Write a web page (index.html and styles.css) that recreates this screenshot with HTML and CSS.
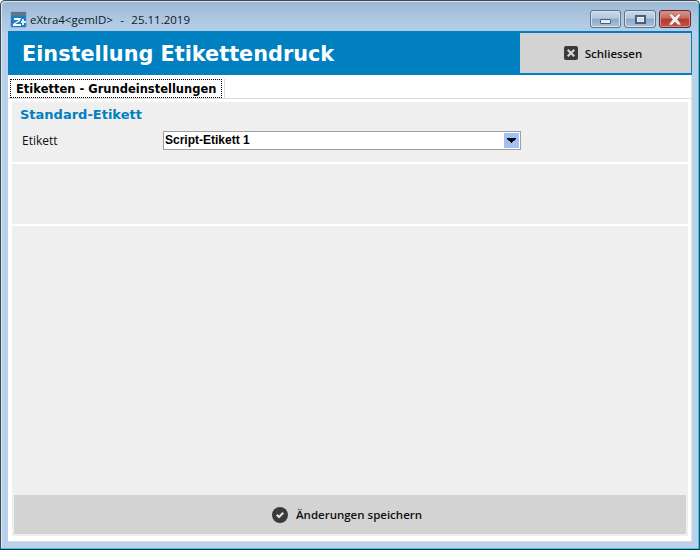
FILE: index.html
```html
<!DOCTYPE html>
<html lang="de">
<head>
<meta charset="utf-8">
<title>eXtra4</title>
<link rel="stylesheet" href="styles.css">
</head>
<body>
<div class="window">
  <div class="titlebar">
    <svg class="app-icon" width="17" height="17" viewBox="0 0 17 17">
      <rect x="0.5" y="0.5" width="16" height="16" rx="2" fill="#1f7fc4" stroke="#8fb8d8"/>
      <rect x="1" y="1" width="15" height="4" fill="#5a7690"/>
      <path d="M4 7h7l-1 3-5 3h6v2H3v-2l6-4H4z" fill="#fff"/>
      <path d="M12 8h2v2h2v2h-2v2h-2v-2h-1v-2h1z" fill="#dff0fb"/>
    </svg>
    <span class="window-title">eXtra4&lt;gemID&gt;  -  25.11.2019</span>
    <div class="controls">
      <div class="ctl ctl-min"><span class="min-glyph"></span></div>
      <div class="ctl ctl-max"><span class="max-glyph"></span></div>
      <div class="ctl ctl-close">
        <svg width="16" height="11" viewBox="0 0 16 11"><path d="M2 0h3l3 3 3-3h3v1l-3.500 4.500L14 10v1h-3L8 8l-3 3H2v-1l3.500-4.500L2 1z" fill="#f1eeee" stroke="#7d3a34" stroke-width=".5"/></svg>
      </div>
    </div>
  </div>
  <div class="client">
    <header class="header">
      <h1 class="heading">Einstellung Etikettendruck</h1>
      <button class="close-btn" type="button">
        <svg width="14" height="14" viewBox="0 0 14 14"><rect width="14" height="14" rx="2" fill="#3a3a3a"/><path d="M3 4.500 4.500 3 7 5.500 9.500 3 11 4.500 8.500 7 11 9.500 9.500 11 7 8.500 4.500 11 3 9.500 5.500 7z" fill="#d8d8d8"/></svg>
        <span>Schliessen</span>
      </button>
    </header>
    <div class="tabs"><div class="tab">Etiketten - Grundeinstellungen</div></div>
    <main class="body">
      <section class="panel panel-top">
        <h2 class="section-title">Standard-Etikett</h2>
        <div class="row">
          <label class="label">Etikett</label>
          <div class="select">
            <span class="select-value">Script-Etikett 1</span>
            <span class="select-arrow"><svg width="9" height="5" viewBox="0 0 9 5"><path d="M0 0h9v1L7 3H6v1H5v1H4V4H3V3H2L0 1z" fill="#000"/></svg></span>
          </div>
        </div>
      </section>
      <section class="panel panel-mid"></section>
      <section class="panel panel-main">
        <button class="save-btn" type="button">
          <svg width="16" height="16" viewBox="0 0 16 16"><circle cx="8" cy="8" r="8" fill="#3a3a3a"/><path d="M4 8.500 5.500 7 7 8.500 10.500 5 12 6.500 7 11.500z" fill="#e4e4e4"/></svg>
          <span>Änderungen speichern</span>
        </button>
      </section>
    </main>
  </div>
</div>
</body>
</html>
```
FILE: styles.css
```css
* { box-sizing: border-box; }
html, body { margin: 0; padding: 0; }
body { width: 700px; height: 550px; overflow: hidden; background: #fff; }

.window {
  width: 700px;
  height: 550px;
  display: flex;
  flex-direction: column;
  border: 1px solid #3c4a55;
  border-bottom-color: #1b2a33;
  border-radius: 5px 5px 0 0;
  background: #b9d1ea;
  box-shadow: inset -1px -1px 0 #1fd0ee, inset 1px 0 0 #dfe9f3;
  padding: 0 7px 7px 7px;
}

.titlebar {
  height: 30px;
  margin: 0 -6px;
  padding: 7px 7px 0 8px;
  flex: none;
  display: flex;
  align-items: center;
  background: linear-gradient(#9cb6d2, #aec8e2 60%, #b4cde6);
  border-radius: 4px 4px 0 0;
  box-shadow: inset 0 1px 0 #d8e4ef;
}
.app-icon { flex: none; }
.window-title {
  margin-left: 3px;
  font: 11.500px "Open Sans", "Noto Sans", sans-serif;
  word-spacing: 0.700px;
  color: #10171e;
  white-space: pre;
}
.controls { margin-left: auto; display: flex; gap: 3px; align-self: flex-start; margin-top: 2px; }
.ctl {
  height: 18px;
  border: 1px solid #5f7286;
  border-radius: 3px;
  display: flex;
  align-items: center;
  justify-content: center;
  width: 31px;
  background: linear-gradient(#c9d8e8 0, #b4c9de 45%, #8ba8c7 50%, #a9c2db 100%);
  box-shadow: inset 0 0 0 1px #d7e3ee;
}
.ctl-max { width: 32px; }
.ctl-close {
  width: 32px;
  border-color: #5b2a3a;
  background: linear-gradient(#d79488 0, #c9685b 45%, #b33a2b 50%, #c25546 100%);
  box-shadow: inset 0 0 0 1px #d98f86;
}
.min-glyph { width: 11px; height: 5px; margin-top: 5px; background: #e9eef4; border: 1px solid #4d5e72; border-radius: 1px; }
.max-glyph { width: 11px; height: 9px; border: 2px solid #4d5e72; outline: 1px solid #e6edf4; outline-offset: -3px; background: #cfdbe8; }

.client {
  flex: 1;
  min-height: 0;
  display: flex;
  flex-direction: column;
  background: #fff;
  border-bottom: 1px solid #d9d9d9;
  border-right: 1px solid #e4e4e4;
}

.header {
  flex: none;
  height: 44px;
  margin-right: -1px;
  display: flex;
  align-items: center;
  justify-content: space-between;
  padding: 2px 1px 2px 14px;
  background: #0080c0;
}
.heading {
  margin: 0;
  padding-top: 1px;
  font: bold 20.800px "DejaVu Sans", sans-serif;
  color: #fff;
}
.close-btn {
  width: 171px;
  height: 40px;
  border: 0;
  padding: 0 5px 0 0;
  background: #d3d3d3;
  display: flex;
  align-items: center;
  justify-content: center;
  gap: 7px;
  font: 600 11.500px "Open Sans", sans-serif;
  color: #101010;
}

.tabs {
  flex: none;
  height: 24px;
  border-bottom: 1px solid #dcdcdc;
  display: flex;
  padding: 4px 0 0 2px;
}
.tab {
  height: 19px;
  padding: 0 5px;
  display: flex;
  align-items: center;
  font: bold 11.500px "DejaVu Sans", sans-serif;
  color: #000;
  border: 1px dotted #000;
  background: #fff;
  box-shadow: 2px 0 0 #fff, 3px 0 0 #dcdcdc;
}

.body {
  flex: 1;
  min-height: 0;
  display: flex;
  flex-direction: column;
  gap: 2px;
  padding: 3px 2px 5px 4px;
  margin-right: 1px;
}
.panel { background: #efefef; }
.panel-top { height: 60px; flex: none; padding: 5px 8px 0 8px; }
.panel-mid { height: 60px; flex: none; }
.panel-main { flex: 1; display: flex; flex-direction: column; justify-content: flex-end; padding: 0 2px 2px 2px; }

.section-title {
  margin: 0;
  font: bold 13px "DejaVu Sans", sans-serif;
  color: #0080c0;
  line-height: 16px;
}
.row { display: flex; align-items: center; margin-top: 8px; }
.label {
  width: 143px;
  padding-left: 2px;
  font: 12px "Open Sans", sans-serif;
  color: #101010;
}
.select {
  width: 358px;
  height: 19px;
  border: 1px solid #a0a0a0;
  background: #fff;
  display: flex;
  align-items: center;
  justify-content: space-between;
  padding: 1px;
}
.select-value { padding-bottom: 2px; font: bold 12px "Liberation Sans", Arial, sans-serif; color: #000; }
.select-arrow {
  width: 15px;
  height: 15px;
  background: #a1c0f8;
  display: flex;
  align-items: center;
  justify-content: center;
}

.save-btn {
  width: 100%;
  height: 39px;
  border: 0;
  padding: 0 6px 0 0;
  background: #d3d3d3;
  display: flex;
  align-items: center;
  justify-content: center;
  gap: 8px;
  font: 600 11.500px "Open Sans", sans-serif;
  color: #101010;
}
```
